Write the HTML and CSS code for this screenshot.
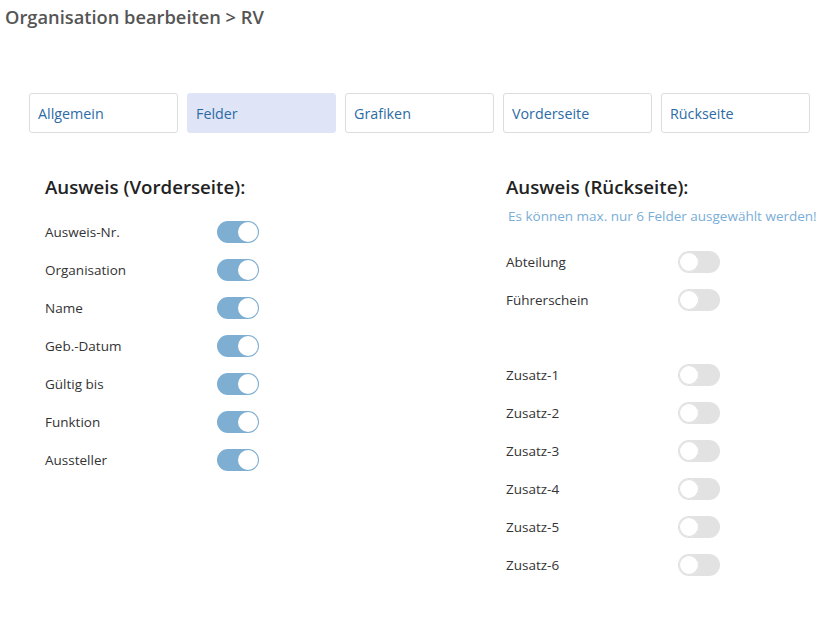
FILE: index.html
```html
<!DOCTYPE html>
<html lang="de">
<head>
<meta charset="utf-8">
<title>Organisation bearbeiten</title>
<link rel="stylesheet" href="styles.css">
</head>
<body>
<h1 class="page-title">Organisation bearbeiten &gt; RV</h1>
<nav class="tabs">
  <a class="tab">Allgemein</a>
  <a class="tab active">Felder</a>
  <a class="tab">Grafiken</a>
  <a class="tab">Vorderseite</a>
  <a class="tab">Rückseite</a>
</nav>
<main class="columns">
  <section class="col">
    <h2 class="col-title">Ausweis (Vorderseite):</h2>
    <div class="rows">
      <div class="row"><span class="label">Ausweis-Nr.</span><span class="toggle on"></span></div>
      <div class="row"><span class="label">Organisation</span><span class="toggle on"></span></div>
      <div class="row"><span class="label">Name</span><span class="toggle on"></span></div>
      <div class="row"><span class="label">Geb.-Datum</span><span class="toggle on"></span></div>
      <div class="row"><span class="label">Gültig bis</span><span class="toggle on"></span></div>
      <div class="row"><span class="label">Funktion</span><span class="toggle on"></span></div>
      <div class="row"><span class="label">Aussteller</span><span class="toggle on"></span></div>
    </div>
  </section>
  <section class="col">
    <h2 class="col-title">Ausweis (Rückseite):</h2>
    <p class="note">Es können max. nur 6 Felder ausgewählt werden!</p>
    <div class="rows">
      <div class="row"><span class="label">Abteilung</span><span class="toggle"></span></div>
      <div class="row"><span class="label">Führerschein</span><span class="toggle"></span></div>
      <div class="row spacer"></div>
      <div class="row"><span class="label">Zusatz-1</span><span class="toggle"></span></div>
      <div class="row"><span class="label">Zusatz-2</span><span class="toggle"></span></div>
      <div class="row"><span class="label">Zusatz-3</span><span class="toggle"></span></div>
      <div class="row"><span class="label">Zusatz-4</span><span class="toggle"></span></div>
      <div class="row"><span class="label">Zusatz-5</span><span class="toggle"></span></div>
      <div class="row"><span class="label">Zusatz-6</span><span class="toggle"></span></div>
    </div>
  </section>
</main>
</body>
</html>
```
FILE: styles.css
```css
* { box-sizing: border-box; }
html, body { margin: 0; padding: 0; background: #fff; }
body {
  font-family: "Open Sans", "Noto Sans", sans-serif;
  color: #333;
  width: 832px;
  overflow: hidden;
}
.page-title {
  margin: 0;
  padding: 5px 0 0 5px;
  font-size: 18.3px;
  line-height: 24px;
  font-weight: 600;
  color: #555;
}
.tabs {
  display: flex;
  gap: 9px;
  margin: 64px 0 0 29px;
}
.tab {
  width: 149px;
  height: 40px;
  display: flex;
  align-items: center;
  padding: 0 8px;
  border: 1px solid #dcdcdc;
  border-radius: 3px;
  font-size: 14.3px;
  color: #2c6ba6;
  background: #fff;
}
.tab.active {
  background: #dfe5f6;
  border-color: #dfe5f6;
}
.columns {
  display: grid;
  grid-template-columns: 461px 1fr;
  padding-left: 45px;
  margin-top: 42px;
}
.col-title {
  margin: 0;
  font-size: 18.7px;
  line-height: 24px;
  font-weight: 600;
  color: #222;
}
.col > .col-title + .rows { margin-top: 14px; }
.note {
  margin: 8px 0 18px 2px;
  font-size: 13.5px;
  line-height: 18px;
  color: #7aaed6;
  white-space: nowrap;
}
.row {
  display: flex;
  align-items: center;
  height: 38px;
}
.row.spacer { height: 37px; }
.label {
  width: 172px;
  font-size: 13.5px;
  color: #333;
}
.toggle {
  position: relative;
  width: 42px;
  height: 22px;
  border-radius: 11px;
  background: #e2e2e2;
}
.toggle::after {
  content: "";
  position: absolute;
  top: 1px;
  left: 1px;
  width: 20px;
  height: 20px;
  border-radius: 50%;
  background: #fff;
  box-shadow: 0 0 0 1px #dedede inset;
}
.toggle.on { background: #7eaed1; }
.toggle.on::after {
  left: 21px;
  box-shadow: none;
}
```
